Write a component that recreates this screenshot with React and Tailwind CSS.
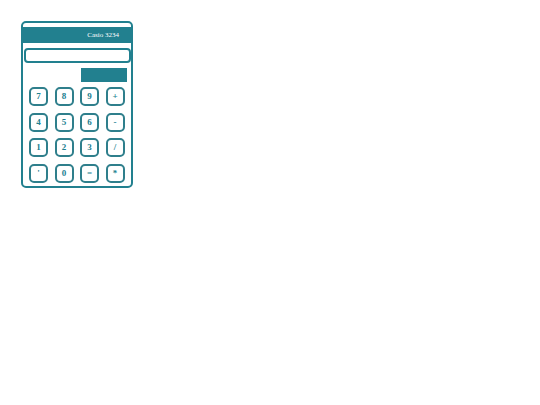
const keys = ["7", "8", "9", "+", "4", "5", "6", "-", "1", "2", "3", "/", "'", "0", "=", "*"];

function Calculator() {
    return (
        <div className="w-[112px] h-[167px] border-2 border-[#22808f] rounded-[5px] bg-white pt-[4px] flex flex-col" style={{ fontFamily: '"Liberation Serif", serif' }}>
            <div className="h-[16px] bg-[#22808f] flex items-center justify-end pr-[12px]">
                <span className="text-[7px] text-white leading-none">Casio 3234</span>
            </div>
            <div className="mt-[5px] ml-[1px] h-[15px] border-2 border-[#22808f] rounded-[4px]"></div>
            <div className="mt-[5px] self-end mr-[4px] w-[46px] h-[14px] bg-[#22808f]"></div>
            <div className="mt-[5px] pl-[6px] grid grid-cols-[repeat(4,19px)] gap-x-[6.5px] gap-y-[6.5px]">
                {keys.map((k) => (
                    <button key={k} className="w-[19px] h-[19px] border-2 border-[#2f7f8c] rounded-[5px] text-[9px] font-bold text-[#22808f] flex items-center justify-center leading-none">
                        {k}
                    </button>
                ))}
            </div>
        </div>
    );
}

export default function App() {
    return (
        <div className="w-[540px] h-[405px] bg-white pt-[21px] pl-[21px]">
            <Calculator />
        </div>
    );
}
